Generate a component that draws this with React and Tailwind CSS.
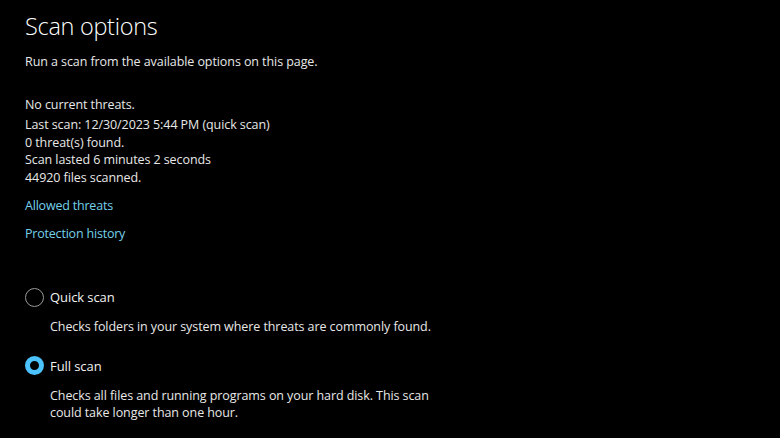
import React, { useState } from 'react';

const stats = [
  'Last scan: 12/30/2023 5:44 PM (quick scan)',
  '0 threat(s) found.',
  'Scan lasted 6 minutes 2 seconds',
  '44920 files scanned.',
];

const options = [
  { id: 'quick', label: 'Quick scan', desc: 'Checks folders in your system where threats are commonly found.' },
  {
    id: 'full',
    label: 'Full scan',
    desc: 'Checks all files and running programs on your hard disk. This scan could take longer than one hour.',
  },
];

const Radio = ({ checked }) =>
  checked ? (
    <span className="w-[19px] h-[19px] rounded-full border-[5px] border-[#4cc2ff] bg-black shrink-0" />
  ) : (
    <span className="w-[19px] h-[19px] rounded-full border border-[#9a9a9a] shrink-0" />
  );

export default function App() {
  const [scan, setScan] = useState('full');

  return (
    <div className="w-[780px] h-[438px] bg-black text-[#e8e8e8] overflow-hidden font-['Open_Sans',sans-serif] text-[12.5px] tracking-[-0.08px]">
      <div className="pl-[25px] pt-[8px]">
        <h1 className="text-[23.5px] font-light text-white leading-[36px] tracking-[-0.3px]">Scan options</h1>
        <p className="mt-[9px] leading-[18px]">Run a scan from the available options on this page.</p>

        <div className="mt-[25px] leading-[18px]">No current threats.</div>
        <div className="mt-[2px] leading-[17.5px]">
          {stats.map((s) => (
            <div key={s}>{s}</div>
          ))}
        </div>

        <div className="mt-[11px] flex flex-col items-start gap-[10px] text-[#76d1ea] leading-[18px] tracking-[-0.2px]">
          <a className="cursor-pointer">Allowed threats</a>
          <a className="cursor-pointer">Protection history</a>
        </div>

        <div className="mt-[44px] flex flex-col">
          {options.map((o, i) => (
            <div key={o.id} className={i > 0 ? 'mt-[20px]' : ''}>
              <button onClick={() => setScan(o.id)} className="flex items-center gap-[6px] text-[#f2f2f2] leading-[20px] cursor-pointer">
                <Radio checked={scan === o.id} />
                <span className="text-[13px]">{o.label}</span>
              </button>
              <p className="mt-[11px] pl-[25px] w-[430px] leading-[17.5px]">{o.desc}</p>
            </div>
          ))}
        </div>
      </div>
    </div>
  );
}
